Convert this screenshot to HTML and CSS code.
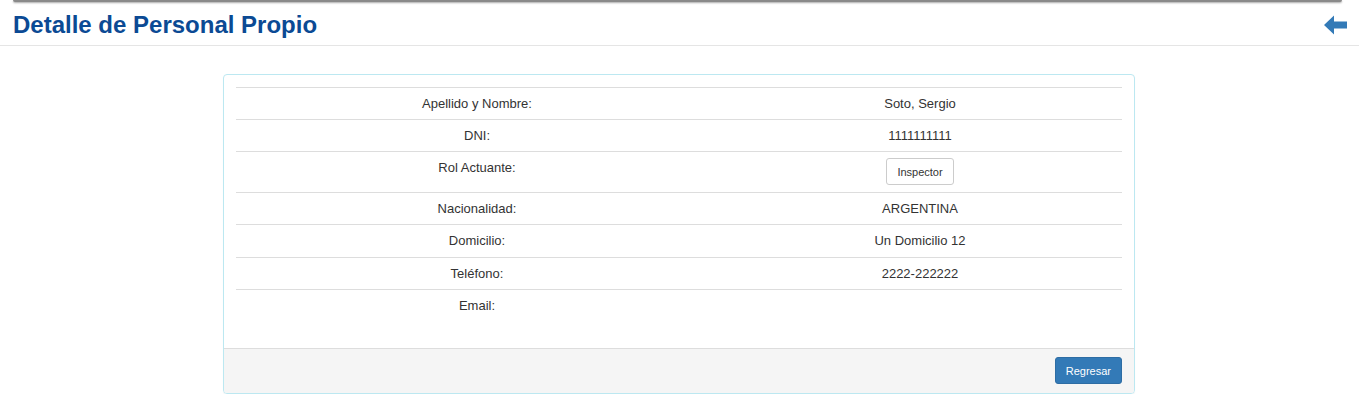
FILE: index.html
```html
<!DOCTYPE html>
<html lang="es">
<head>
<meta charset="utf-8">
<title>Detalle de Personal Propio</title>
<link rel="stylesheet" href="styles.css">
</head>
<body>
<div class="topbar"></div>
<header class="page-header">
  <h1 class="page-title">Detalle de Personal Propio</h1>
  <a class="back-link" href="#" aria-label="Volver">
    <svg width="23" height="20" viewBox="0 0 23 20"><path d="M0 10 L10 0.5 L10 6.5 L23 6.5 L23 13.5 L10 13.5 L10 19.5 Z" fill="#337ab7"/></svg>
  </a>
</header>
<main class="content">
  <section class="panel">
    <div class="panel-body">
      <table class="detail-table">
        <tr><td class="label">Apellido y Nombre:</td><td class="value">Soto, Sergio</td></tr>
        <tr><td class="label">DNI:</td><td class="value">1111111111</td></tr>
        <tr class="row-tall"><td class="label">Rol Actuante:</td><td class="value"><button class="btn btn-default">Inspector</button></td></tr>
        <tr><td class="label">Nacionalidad:</td><td class="value">ARGENTINA</td></tr>
        <tr class="row-tall"><td class="label">Domicilio:</td><td class="value">Un Domicilio 12</td></tr>
        <tr><td class="label">Teléfono:</td><td class="value">2222-222222</td></tr>
        <tr><td class="label">Email:</td><td class="value"></td></tr>
      </table>
    </div>
    <div class="panel-footer">
      <button class="btn btn-primary">Regresar</button>
    </div>
  </section>
</main>
</body>
</html>
```
FILE: styles.css
```css
* { box-sizing: border-box; }
html, body { margin: 0; padding: 0; background: #fff; }
body {
  font-family: "Liberation Sans", Arial, sans-serif;
  font-size: 13px;
  color: #333;
}
.topbar {
  margin: 0 17px 0 13px;
  height: 2px;
  background: #8a8a8a;
  box-shadow: 0 1px 2px rgba(0,0,0,0.35);
  border-radius: 0 0 3px 3px;
}
.page-header {
  display: flex;
  align-items: center;
  justify-content: space-between;
  height: 44px;
  padding: 0 12px 0 13px;
  border-bottom: 1px solid #e5e5e5;
}
.page-title {
  margin: 0;
  padding-top: 2px;
  font-size: 24px;
  line-height: 26px;
  font-weight: bold;
  color: #0b4a94;
}
.back-link {
  display: flex;
  padding-top: 3px;
}
.content {
  padding: 28px 1px 0 0;
}
.panel {
  width: 912px;
  margin: 0 auto;
  border: 1px solid #bce8f1;
  border-radius: 4px;
  overflow: hidden;
  box-shadow: 0 1px 1px rgba(0,0,0,0.05);
}
.panel-body {
  padding: 12px 12px 27px;
}
.detail-table {
  width: 100%;
  border-collapse: collapse;
}
.detail-table td {
  border-top: 1px solid #ddd;
  padding: 6px 8px;
  line-height: 19px;
  text-align: center;
  vertical-align: top;
}
.detail-table .row-tall td { padding-bottom: 7px; }
.detail-table .label { width: 482px; }
.btn {
  font-family: "Liberation Sans", Arial, sans-serif;
  font-size: 11px;
  height: 27px;
  padding: 0 10px;
  border-radius: 3px;
  border: 1px solid;
  cursor: pointer;
}
.btn-default {
  background: #fff;
  border-color: #ccc;
  color: #333;
}
.panel-footer {
  display: flex;
  justify-content: flex-end;
  padding: 8px 12px 9px;
  background: #f5f5f5;
  border-top: 1px solid #ddd;
}
.btn-primary {
  background: #337ab7;
  border-color: #2e6da4;
  color: #fff;
}
```
